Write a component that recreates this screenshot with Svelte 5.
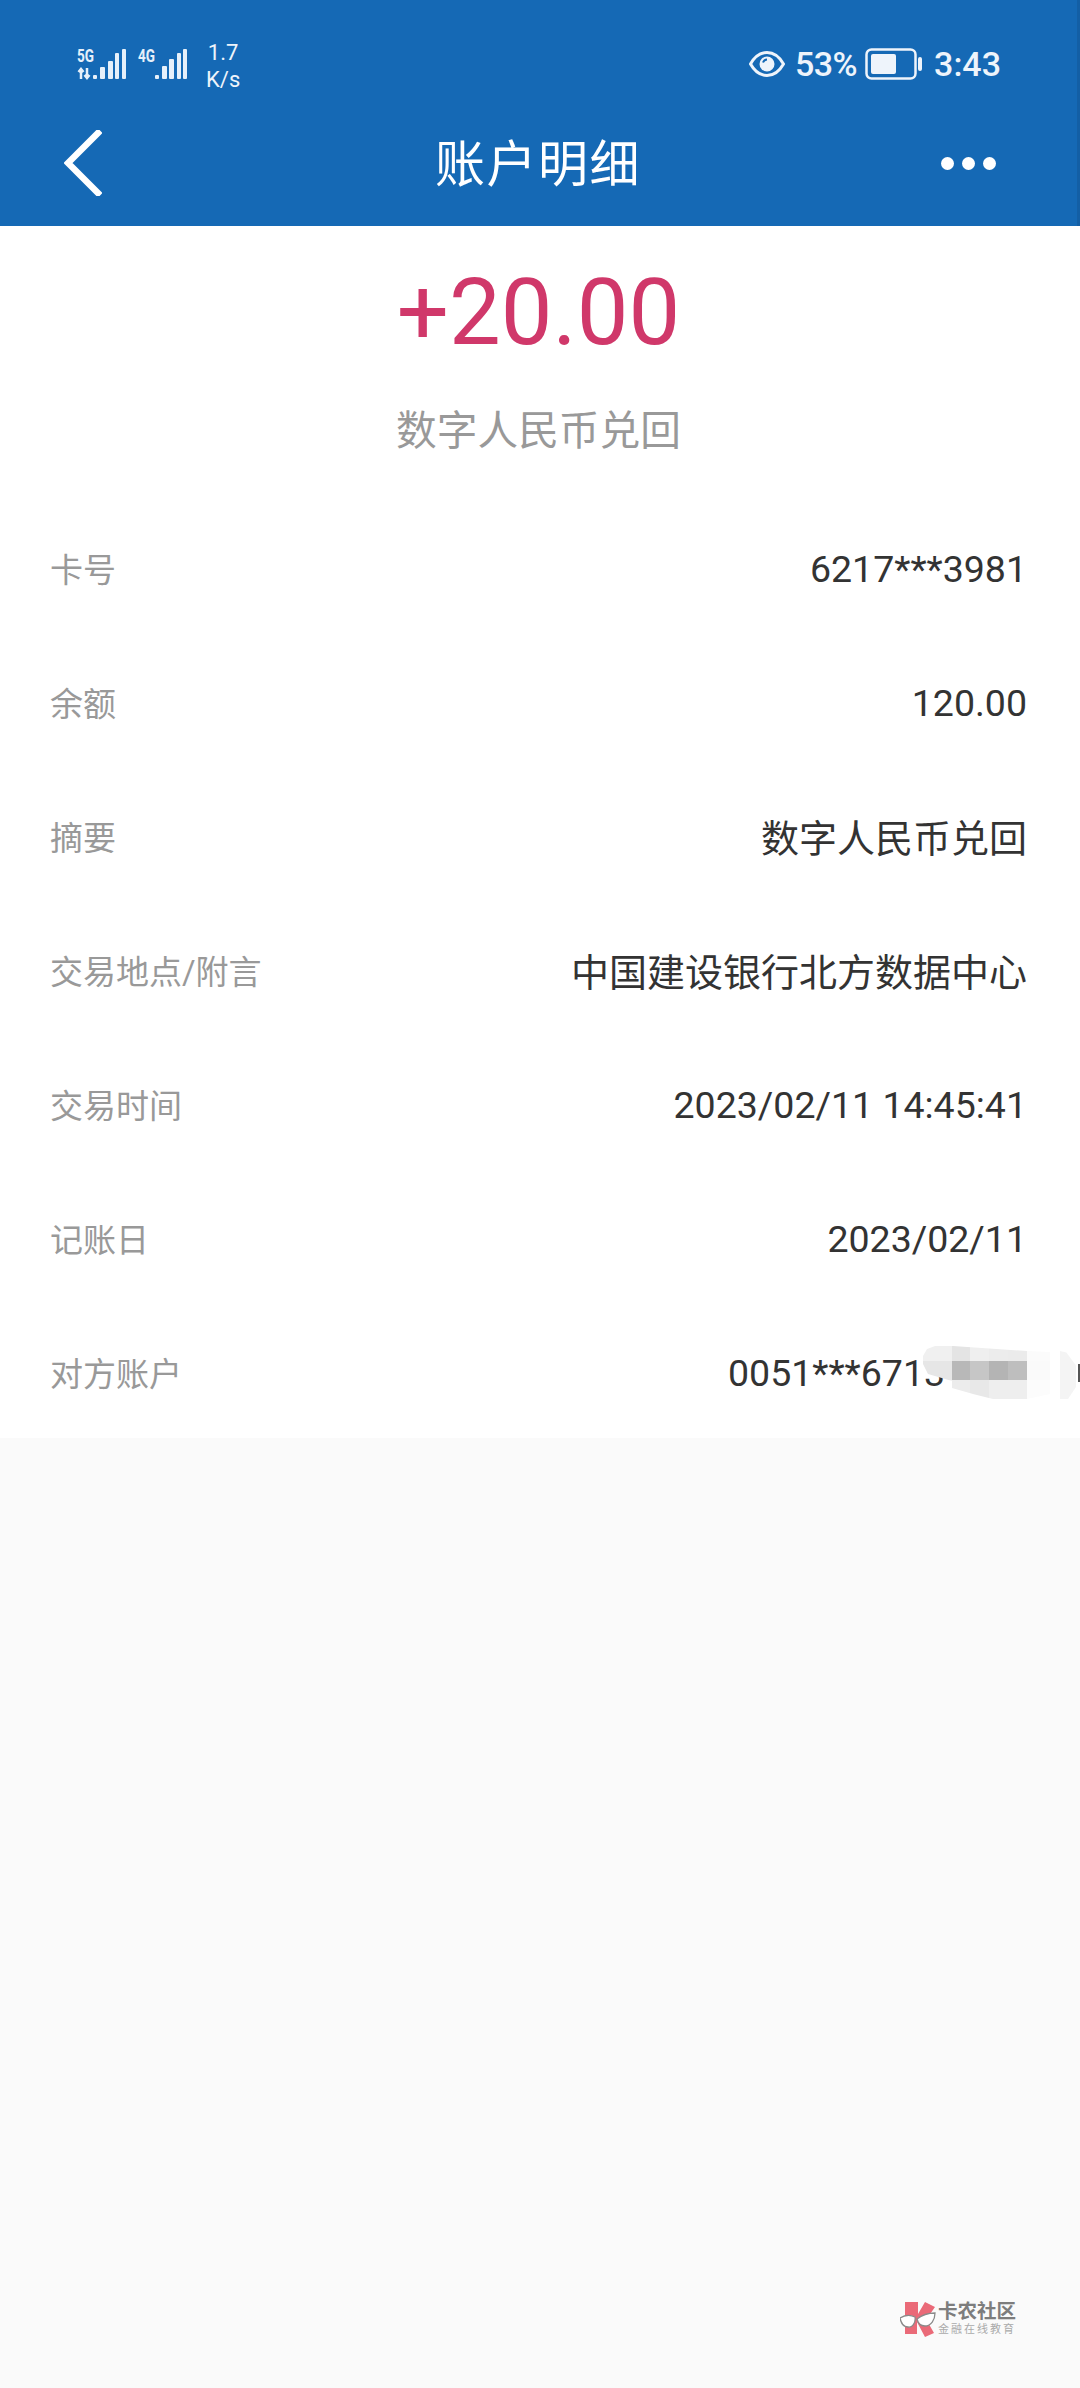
<script lang="ts">
  const rows = [
    { label: "卡号", value: "6217***3981" },
    { label: "余额", value: "120.00" },
    { label: "摘要", value: "数字人民币兑回", cn: true },
    { label: "交易地点/附言", value: "中国建设银行北方数据中心", cn: true },
    { label: "交易时间", value: "2023/02/11 14:45:41" },
    { label: "记账日", value: "2023/02/11" },
    { label: "对方账户", value: "0051***6713", masked: true },
  ];

  // mosaic cells over the counterparty account, row by row
  const mosaic = [
    "#f0f0f0", "#e4e4e4", "#efefef", "#ececec", "#ebebeb", "#fbfbfb",
    "#e6e6e6", "#b8b8b8", "#c6c6c6", "#b4b4b4", "#bebebe", "#fafafa",
    "#f1f1f1", "#ececec", "#e8e8e8", "#eeeeee", "#eeeeee", "#fcfcfc",
  ];
</script>

<div class="page">
  <header class="top">
    <div class="status">
      <div class="status-left">
        <svg class="signal" width="50" height="30" viewBox="0 0 50 30">
          <text x="0" y="13" font-size="18" textLength="17" lengthAdjust="spacingAndGlyphs" class="net">5G</text>
          <path d="M4 30v-10M1.500 23l2.500-3 2.500 3M10 19v10M7.500 26l2.500 3 2.500-3" class="arrows" />
          <rect x="16" y="26" width="4" height="4" rx="1" />
          <rect x="23" y="18" width="5" height="12" rx="1" />
          <rect x="31" y="12" width="5" height="18" rx="1" />
          <rect x="38" y="4" width="4" height="26" rx="1" />
          <rect x="45" y="0" width="4" height="30" rx="1" />
        </svg>
        <svg class="signal" width="50" height="30" viewBox="0 0 50 30">
          <text x="0" y="13" font-size="18" textLength="17" lengthAdjust="spacingAndGlyphs" class="net">4G</text>
          <rect x="17" y="26" width="4" height="4" rx="1" />
          <rect x="24" y="17" width="5" height="13" rx="1" />
          <rect x="31" y="10" width="5" height="20" rx="1" />
          <rect x="39" y="4" width="4" height="26" rx="1" />
          <rect x="45" y="0" width="4" height="30" rx="1" />
        </svg>
        <div class="speed"><span>1.7</span><span>K/s</span></div>
      </div>
      <div class="status-right">
        <svg class="eye" width="36" height="28" viewBox="0 0 36 28">
          <path d="M1.500 14C6 6 11.500 2.500 18 2.500S30 6 34.500 14C30 22 24.500 25.500 18 25.500S6 22 1.500 14Z" fill="none" stroke="#eef4fb" stroke-width="3" />
          <circle cx="18" cy="14" r="7.500" fill="#eef4fb" />
          <path d="M14 12.500a4.500 4.500 0 0 1 4-3" fill="none" stroke="#1569b5" stroke-width="2" />
        </svg>
        <span class="pct">53%</span>
        <svg class="battery" width="58" height="32" viewBox="0 0 58 32">
          <rect x="1.500" y="1.500" width="49" height="29" rx="5" fill="none" stroke="#eef4fb" stroke-width="2.500" />
          <rect x="6" y="6" width="25" height="20" rx="2" fill="#eef4fb" />
          <rect x="53" y="9" width="4" height="14" rx="2" fill="#eef4fb" />
        </svg>
        <span class="clock">3:43</span>
      </div>
    </div>
    <nav class="bar">
      <svg class="back" width="38" height="66" viewBox="0 0 38 66">
        <path d="M34 3 4 33l30 30" fill="none" stroke="#fff" stroke-width="6.500" stroke-linecap="square" />
      </svg>
      <h1>账户明细</h1>
      <div class="dots"><i></i><i></i><i></i></div>
    </nav>
  </header>

  <main class="sheet">
    <div class="amount">+20.00</div>
    <div class="sub">数字人民币兑回</div>
    <div class="rows">
      {#each rows as row}
        <div class="row">
          <span class="label">{row.label}</span>
          <span class="value" class:cn={row.cn} class:masked={row.masked}>{row.value}</span>
          {#if row.masked}
            <div class="blur">
              {#each mosaic as c}
                <b style="background:{c}"></b>
              {/each}
            </div>
            <div class="smudge"></div>
            <div class="cut"></div>
          {/if}
        </div>
      {/each}
    </div>
  </main>

  <div class="rest">
    <div class="mark">
      <svg width="36" height="38" viewBox="0 0 36 38">
        <path d="M5 2h13v12l7-12 10 5-7 10-2 2 8 14-9 4-8-15v12H5Z" fill="#ea6a78" />
        <path d="M0 18C5 15 11 15 15 17C16 23 12 28 8 27C3 27 1 23 0 18Z" fill="#fff" stroke="#8a8a8a" stroke-width="1.300" />
        <path d="M17 19C22 15 30 13 35 13C35 20 31 26 25 26C21 26 18 23 17 19Z" fill="#fff" stroke="#8a8a8a" stroke-width="1.300" />
      </svg>
      <div class="mark-text">
        <span class="mark-name">卡农社区</span>
        <span class="mark-tag">金融在线教育</span>
      </div>
    </div>
  </div>
</div>

<style>
  :global(body) {
    margin: 0;
    background: #fafafa;
  }

  .page {
    width: 1080px;
    height: 2388px;
    display: flex;
    flex-direction: column;
    font-family: Roboto, "Noto Sans CJK SC", sans-serif;
    overflow: hidden;
  }

  .top {
    background: #1569b5;
    height: 226px;
    color: #fff;
    flex: none;
    box-shadow: inset -3px 0 0 #135fa5;
  }

  .status {
    height: 100px;
    display: flex;
    justify-content: space-between;
    align-items: center;
    padding: 28px 79px 0 77px;
    box-sizing: border-box;
    color: #eef4fb;
  }

  .status-left,
  .status-right {
    display: flex;
    align-items: center;
  }

  .signal {
    fill: #e6f0fa;
    margin-right: 11px;
    overflow: visible;
  }

  .net {
    font-family: Roboto, sans-serif;
    font-weight: 700;
  }

  .arrows {
    fill: none;
    stroke: #e6f0fa;
    stroke-width: 2.500;
  }

  .speed {
    display: flex;
    flex-direction: column;
    align-items: center;
    font-size: 22px;
    line-height: 27px;
    margin-left: 7px;
    margin-top: 4px;
  }

  .status-right {
    font-size: 34px;
    font-weight: 500;
  }

  .eye {
    margin-right: 10px;
  }

  .pct {
    margin-right: 8px;
    letter-spacing: -0.5px;
  }

  .battery {
    margin-right: 11px;
  }

  .bar {
    height: 126px;
    display: flex;
    align-items: center;
    justify-content: space-between;
    padding: 0 80px 0 64px;
    position: relative;
  }

  h1 {
    position: absolute;
    left: 0;
    right: 4px;
    margin: 3px 0 0;
    text-align: center;
    font-size: 50px;
    font-weight: 400;
    line-height: 1;
    letter-spacing: 1.500px;
  }

  .dots {
    display: flex;
    gap: 8px;
    margin-right: 4px;
  }

  .dots i {
    width: 13px;
    height: 13px;
    border-radius: 50%;
    background: #fff;
  }

  .sheet {
    background: #fff;
    height: 1212px;
    flex: none;
    padding-top: 30px;
    box-sizing: border-box;
  }

  .amount {
    text-align: center;
    font-size: 92px;
    line-height: 114px;
    color: #d0386a;
    padding-right: 3px;
  }

  .sub {
    text-align: center;
    font-size: 40.700px;
    line-height: 56px;
    color: #999;
    margin-top: 33px;
    padding-right: 3px;
  }

  .rows {
    margin-top: 43px;
  }

  .row {
    height: 134px;
    display: flex;
    justify-content: space-between;
    align-items: center;
    padding: 0 53px 0 50px;
    position: relative;
  }

  .label {
    font-size: 33px;
    color: #999;
    margin-top: -3px;
  }

  .value {
    font-size: 37.500px;
    color: #333;
  }

  .value.cn {
    font-size: 38px;
    margin-top: -3px;
  }

  .value.masked {
    width: 299px;
  }

  .blur {
    position: absolute;
    left: 923px;
    top: 40px;
    display: grid;
    grid-template-columns: 29px 18px 19px 19px 19px 23px;
    grid-template-rows: 15px 19px 19px;
    clip-path: polygon(0 18px, 0 10px, 4px 3px, 12px 0, 30px 0, 104px 5px, 127px 6px, 127px 48px, 104px 53px, 70px 53px, 50px 48px, 29px 42px, 29px 35px, 5px 28px);
  }

  .blur b {
    display: block;
  }

  .smudge {
    position: absolute;
    left: 1060px;
    top: 45px;
    width: 16px;
    height: 48px;
    background: #f4f4f4;
    clip-path: polygon(0 0, 40% 3%, 100% 30%, 100% 75%, 50% 100%, 0 100%);
  }

  .cut {
    position: absolute;
    right: 0;
    top: 58px;
    width: 2px;
    height: 18px;
    background: #555;
  }

  .rest {
    flex: 1;
    position: relative;
  }

  .mark {
    position: absolute;
    left: 900px;
    top: 862px;
    display: flex;
    align-items: center;
    gap: 2px;
  }

  .mark-text {
    display: flex;
    flex-direction: column;
    color: #888;
  }

  .mark-name {
    font-size: 19.500px;
    font-weight: 700;
    line-height: 22px;
    color: #7d7d7d;
  }

  .mark-tag {
    font-size: 11px;
    line-height: 14px;
    letter-spacing: 2px;
    color: #aaa;
  }
</style>
